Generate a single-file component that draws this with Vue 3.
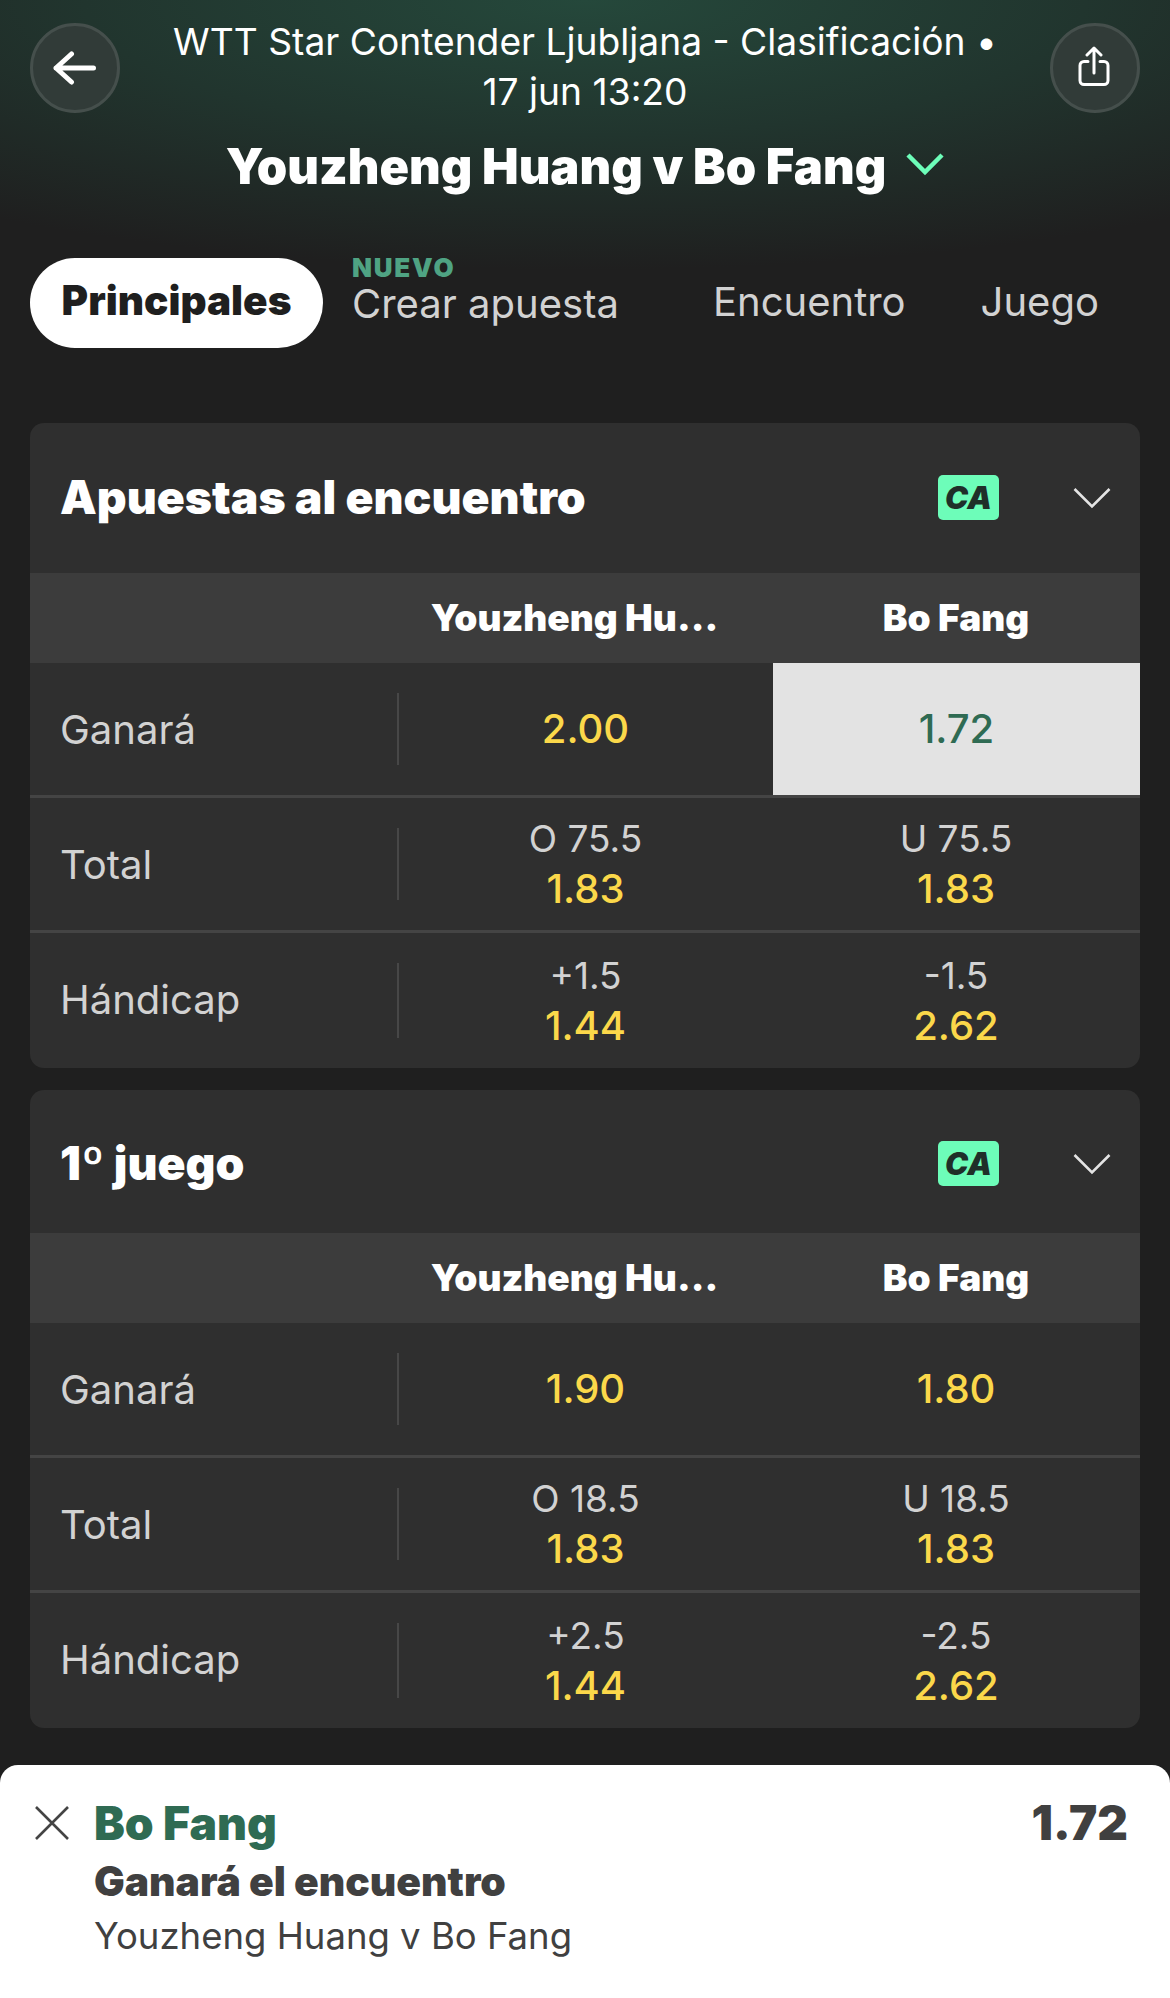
<script setup>
const markets = [
  {
    title: 'Apuestas al encuentro',
    rows: [
      { label: 'Ganará', a: { odd: '2.00' }, b: { odd: '1.72', picked: true } },
      { label: 'Total', a: { line: 'O 75.5', odd: '1.83' }, b: { line: 'U 75.5', odd: '1.83' } },
      { label: 'Hándicap', a: { line: '+1.5', odd: '1.44' }, b: { line: '-1.5', odd: '2.62' } }
    ]
  },
  {
    title: '1º juego',
    short: true,
    rows: [
      { label: 'Ganará', a: { odd: '1.90' }, b: { odd: '1.80' } },
      { label: 'Total', a: { line: 'O 18.5', odd: '1.83' }, b: { line: 'U 18.5', odd: '1.83' } },
      { label: 'Hándicap', a: { line: '+2.5', odd: '1.44' }, b: { line: '-2.5', odd: '2.62' } }
    ]
  }
]
</script>

<template>
  <div class="page">
    <header class="top">
      <button class="round">
        <svg width="44" height="36" viewBox="0 0 44 36" fill="none" stroke="#fff" stroke-width="5" stroke-linecap="round" stroke-linejoin="round">
          <path d="M18.5 4 3 18l15.5 14M3 18h37.5" />
        </svg>
      </button>
      <div class="event">WTT Star Contender Ljubljana - Clasificación •<br />17 jun 13:20</div>
      <button class="round">
        <svg class="share" width="34" height="42" viewBox="0 0 34 42" fill="none" stroke="#fff" stroke-width="3" stroke-linecap="round" stroke-linejoin="round">
          <path d="M17 27V2.5M10 9l7-7 7 7M11 15.5H7a4 4 0 0 0-4 4v15a4 4 0 0 0 4 4h20a4 4 0 0 0 4-4v-15a4 4 0 0 0-4-4h-4" />
        </svg>
      </button>
    </header>

    <div class="match">
      <span>Youzheng Huang v Bo Fang</span>
      <svg class="match-chev" width="38" height="24" viewBox="0 0 38 24" fill="none" stroke="#6dfdb9" stroke-width="4.5">
        <path d="M2 3l17 17L36 3" />
      </svg>
    </div>

    <nav class="tabs">
      <div class="pill">Principales</div>
      <div class="tab-new">
        <span class="new">NUEVO</span>
        <span class="tab">Crear apuesta</span>
      </div>
      <div class="tab enc">Encuentro</div>
      <div class="tab jue">Juego</div>
    </nav>

    <section v-for="m in markets" :key="m.title" class="card">
      <div class="card-head" :class="{ short: m.short }">
        <h2>{{ m.title }}</h2>
        <span class="ca">CA</span>
        <svg class="chev" width="38" height="22" viewBox="0 0 38 22" fill="none" stroke="#e4e4e4" stroke-width="2.6">
          <path d="M1.5 2 19 19.5 36.5 2" />
        </svg>
      </div>
      <div class="cols">
        <span></span>
        <span class="col-a">Youzheng Hu...</span>
        <span class="col-b">Bo Fang</span>
      </div>
      <div v-for="r in m.rows" :key="r.label" class="row">
        <div class="label"><span>{{ r.label }}</span></div>
        <div v-for="c in [r.a, r.b]" :key="c.odd + c.line" class="cell" :class="{ picked: c.picked }">
          <span v-if="c.line" class="line">{{ c.line }}</span>
          <span class="odd">{{ c.odd }}</span>
        </div>
      </div>
    </section>

    <footer class="slip">
      <svg class="close" width="36" height="36" viewBox="0 0 36 36" fill="none" stroke="#444" stroke-width="2.6">
        <path d="M2 2l32 32M34 2 2 34" />
      </svg>
      <div class="slip-text">
        <div class="pick">Bo Fang</div>
        <div class="market">Ganará el encuentro</div>
        <div class="fixture">Youzheng Huang v Bo Fang</div>
      </div>
      <div class="slip-odd">1.72</div>
    </footer>
  </div>
</template>

<style scoped>
.page {
  width: 1170px;
  height: 1998px;
  overflow: hidden;
  background: radial-gradient(ellipse 1000px 270px at 50% 0, #25483b 0, #21352e 50%, #1f1f1f 100%) no-repeat #1f1f1f;
  font-family: Inter, "Liberation Sans", sans-serif;
  color: #fff;
}

.top {
  display: flex;
  justify-content: space-between;
  align-items: flex-start;
  padding: 23px 30px 0;
  height: 140px;
  box-sizing: border-box;
}

.round {
  width: 90px;
  height: 90px;
  border-radius: 50%;
  border: 3px solid #454f4c;
  background: #313b38;
  display: flex;
  align-items: center;
  justify-content: center;
  padding: 0;
  flex: none;
}

.share {
  margin: 0 3px 3px 0;
}

.event {
  margin-top: -6px;
  font-size: 37.2px;
  line-height: 50px;
  text-align: center;
  white-space: nowrap;
}

.match {
  display: flex;
  justify-content: center;
  align-items: center;
  gap: 20px;
  font-size: 48.8px;
  font-weight: 900;
  height: 52px;
  margin-bottom: 66px;
}

.match-chev {
  margin-bottom: 4px;
}

.tabs {
  display: flex;
  align-items: center;
  height: 90px;
  padding-left: 30px;
  margin-bottom: 75px;
}

.pill {
  width: 293px;
  height: 90px;
  line-height: 86px;
  border-radius: 45px;
  background: #fff;
  color: #1f1f1f;
  font-size: 40.5px;
  font-weight: 900;
  text-align: center;
  margin-right: 29px;
}

.tab-new {
  display: flex;
  flex-direction: column;
  margin-bottom: 26px;
  width: 266px;
  white-space: nowrap;
}

.new {
  color: #4fa383;
  font-size: 26px;
  font-weight: 900;
  letter-spacing: 1.8px;
  line-height: 27px;
}

.tab {
  color: #d2d2d2;
  font-size: 40px;
  line-height: 46px;
}

.enc {
  margin-left: 95px;
  margin-bottom: 2px;
}

.jue {
  margin-left: 75px;
  margin-bottom: 2px;
}

.card {
  margin: 0 30px 22px;
  background: #2f2f2f;
  border-radius: 14px;
  overflow: hidden;
}

.card-head {
  display: flex;
  align-items: center;
  height: 150px;
  padding: 0 28px 2px 31px;
  box-sizing: border-box;
}

.card-head.short {
  height: 143px;
  padding-top: 3px;
  padding-bottom: 0;
}

.card-head h2 {
  flex: 1;
  margin: 0;
  font-size: 46.3px;
  font-weight: 900;
  margin-left: -1px;
}

.ca {
  width: 61px;
  height: 45px;
  border-radius: 5px;
  background: #6dfdb9;
  color: #1f2f29;
  font-size: 31px;
  font-weight: 900;
  font-style: italic;
  line-height: 45px;
  text-align: center;
  margin-right: 74px;
}

.chev {
  margin: 2px 1px 0 0;
}

.cols,
.row {
  display: grid;
  grid-template-columns: 369px 373px 368px;
}

.cols {
  height: 90px;
  padding-bottom: 2px;
  box-sizing: border-box;
  background: #3c3c3c;
  align-items: center;
  font-size: 37px;
  font-weight: 900;
  text-align: center;
}

.col-a {
  padding-right: 22px;
  white-space: nowrap;
}

.row {
  height: 135px;
  border-bottom: 3px solid #444;
  box-sizing: border-box;
}

.row:last-child {
  border-bottom: 0;
}

.row:last-child .label {
  padding-bottom: 3px;
}

.label {
  display: flex;
  align-items: center;
  color: #d2d2d2;
  font-size: 40px;
  padding-left: 30px;
  position: relative;
}

.label::after {
  content: "";
  position: absolute;
  right: 0;
  top: 30px;
  bottom: 30px;
  width: 2px;
  background: #474747;
}

.cell {
  display: flex;
  flex-direction: column;
  align-items: center;
  justify-content: center;
}

.cell.picked {
  background: #e3e3e3;
  margin-left: 1px;
}

.cell.picked .odd {
  color: #2f6b53;
}

.line {
  color: #d2d2d2;
  font-size: 37px;
  line-height: 50px;
}

.odd {
  color: #fbd84a;
  font-size: 40px;
  line-height: 50px;
  font-weight: 500;
}

.slip {
  display: flex;
  align-items: flex-start;
  height: 233px;
  margin-top: 37px;
  padding: 30px 42px 0 34px;
  box-sizing: border-box;
  background: #fff;
  border-radius: 18px 18px 0 0;
  color: #404040;
}

.close {
  margin-top: 10px;
  margin-right: 24px;
  flex: none;
}

.slip-text {
  flex: 1;
}

.pick {
  color: #2f6b53;
  font-size: 46.2px;
  font-weight: 900;
  line-height: 56px;
}

.market {
  font-size: 40.8px;
  font-weight: 900;
  line-height: 60px;
}

.fixture {
  font-size: 36.5px;
  line-height: 50px;
}

.slip-odd {
  font-size: 47.5px;
  font-weight: 900;
  line-height: 56px;
}
</style>
